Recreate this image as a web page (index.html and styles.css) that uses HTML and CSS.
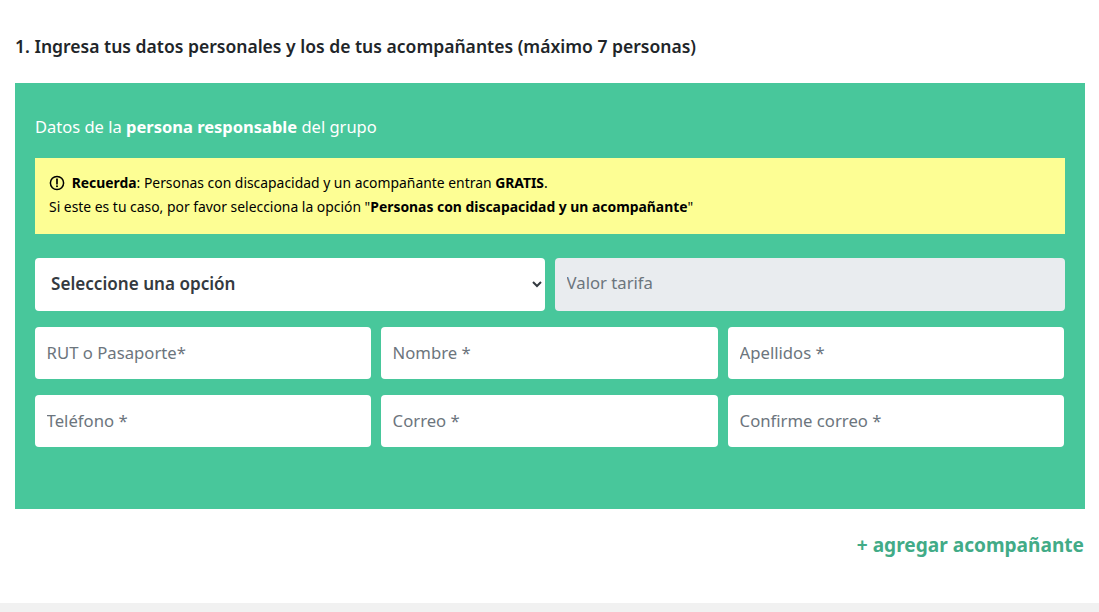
FILE: index.html
```html
<!DOCTYPE html>
<html lang="es">
<head>
    <meta charset="UTF-8">
    <meta name="viewport" content="width=device-width, initial-scale=1.0">
    <title>Datos personales</title>
    <link rel="stylesheet" href="styles.css">
</head>
<body>

    <div class="page">
        <h2 class="step-title">1. Ingresa tus datos personales y los de tus acompañantes (máximo 7 personas)</h2>

        <div class="form-panel">
            <p class="panel-title">Datos de la <strong>persona responsable</strong> del grupo</p>

            <div class="notice">
                <p>
                    <svg class="notice-icon" viewBox="0 0 16 16" width="16" height="16" aria-hidden="true">
                        <circle cx="8" cy="8" r="6.6" fill="none" stroke="#000" stroke-width="1.5"/>
                        <path d="M8 4.2v4.6" fill="none" stroke="#000" stroke-width="1.7" stroke-linecap="round"/>
                        <circle cx="8" cy="11.3" r="1" fill="#000"/>
                    </svg>
                    <strong>Recuerda</strong>: Personas con discapacidad y un acompañante entran <strong>GRATIS</strong>.
                </p>
                <p>Si este es tu caso, por favor selecciona la opción "<strong>Personas con discapacidad y un acompañante</strong>"</p>
            </div>

            <div class="row row-two">
                <select class="field field-select">
                    <option>Seleccione una opción</option>
                </select>
                <input class="field field-tall" type="text" placeholder="Valor tarifa" disabled>
            </div>
            <div class="row row-three">
                <input class="field" type="text" placeholder="RUT o Pasaporte*">
                <input class="field" type="text" placeholder="Nombre *">
                <input class="field" type="text" placeholder="Apellidos *">
            </div>
            <div class="row row-three">
                <input class="field" type="text" placeholder="Teléfono *">
                <input class="field" type="text" placeholder="Correo *">
                <input class="field" type="text" placeholder="Confirme correo *">
            </div>
        </div>

        <div class="add-row">
            <a class="add-link" href="#">+ agregar acompañante</a>
        </div>
    </div>

    <div class="footer-strip"></div>

</body>
</html>
```

FILE: styles.css
```css
body {
    margin: 0;
    font-family: "Noto Sans", Arial, sans-serif;
    color: #212529;
    background-color: #fff;
    overflow: hidden;
}
.page {
    height: 603px;
    padding: 0 14px 0 15px;
    box-sizing: border-box;
}
.step-title {
    margin: 0;
    padding-top: 35px;
    height: 83px;
    box-sizing: border-box;
    font-size: 17.55px;
    line-height: 22px;
    font-weight: 600;
}
.form-panel {
    height: 426px;
    box-sizing: border-box;
    padding: 32px 20px 0;
    background-color: #48c79b;
}
.panel-title {
    margin: 0 0 19px;
    height: 24px;
    font-size: 16.5px;
    line-height: 24px;
    color: #fff;
}
.notice {
    height: 76px;
    box-sizing: border-box;
    padding: 13px 14px;
    margin-bottom: 24px;
    background-color: #fdfe94;
    color: #000;
    font-size: 13.9px;
    line-height: 24px;
}
.notice p {
    margin: 0;
}
.notice-icon {
    vertical-align: -3px;
    margin-right: 3px;
}
.row {
    display: grid;
    gap: 10px;
    margin-bottom: 16px;
}
.row-two {
    grid-template-columns: 1fr 1fr;
}
.row-three {
    grid-template-columns: 336px 337px 336px;
}
.field {
    display: block;
    width: 100%;
    height: 52px;
    box-sizing: border-box;
    padding: 0 12px 2px 11.6px;
    border: none;
    border-radius: 4px;
    background-color: #fff;
    font-family: inherit;
    font-size: 16.7px;
    color: #343a40;
}
.field::placeholder {
    color: #6c757d;
    opacity: 1;
}
.field:disabled {
    background-color: #e9ecef;
}
.field-tall {
    height: 53px;
    padding-bottom: 4px;
}
.field-select {
    height: 53px;
    padding-left: 12px;
    padding-bottom: 2px;
    font-size: 17.1px;
    font-weight: 600;
}
.add-row {
    padding-top: 23px;
    padding-right: 1px;
    text-align: right;
}
.add-link {
    font-size: 19.1px;
    line-height: 26px;
    font-weight: 700;
    color: #42ab87;
    text-decoration: none;
}
.footer-strip {
    height: 9px;
    background-color: #f1f1f1;
}
```
